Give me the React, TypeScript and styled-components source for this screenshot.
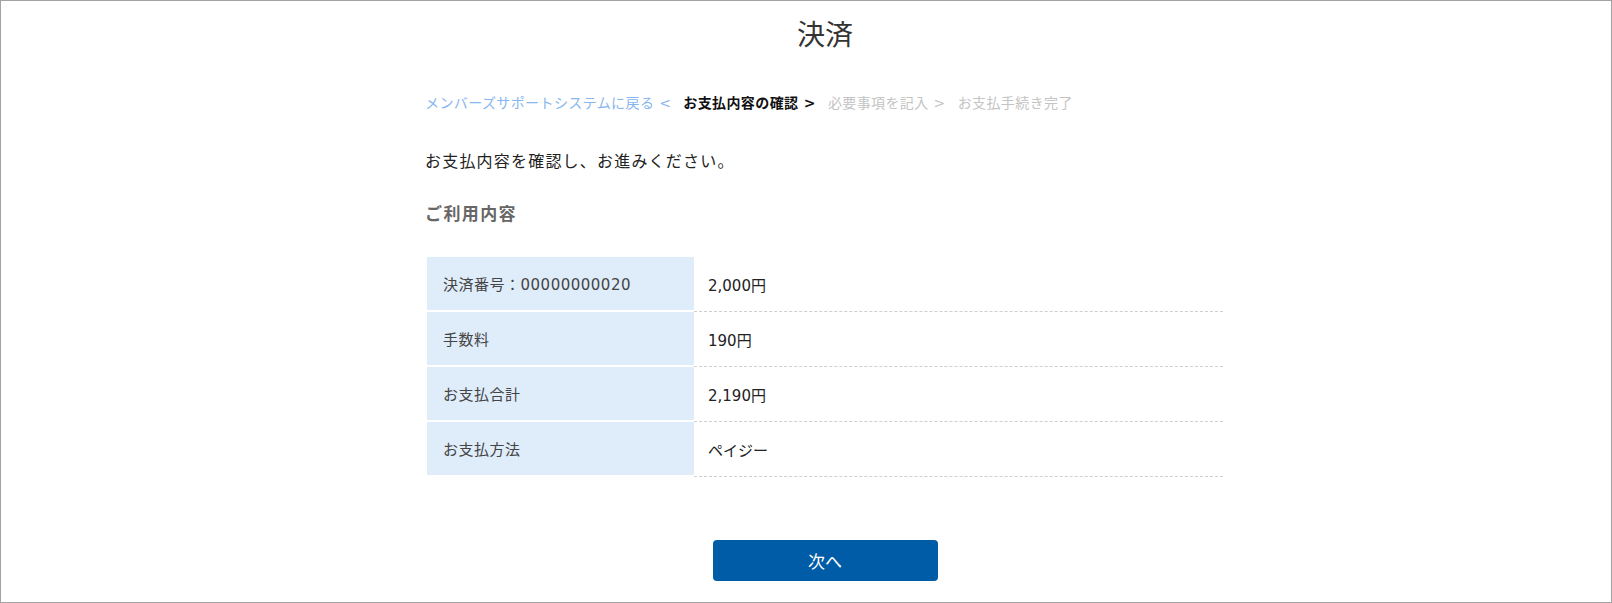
import React from 'react'
import styled, { createGlobalStyle } from 'styled-components'

const GlobalStyle = createGlobalStyle`
  html, body {
    margin: 0;
    padding: 0;
    height: 100%;
    background: #fff;
  }
  body {
    font-family: "DejaVu Sans", "Noto Sans CJK JP", "Noto Sans", sans-serif;
    color: #222;
  }
  #root {
    height: 100%;
  }
`

const Frame = styled.div`
  box-sizing: border-box;
  min-height: 100vh;
  border: 1px solid #a3a3a3;
  padding: 15px 0 0 38px;
  display: flex;
  justify-content: center;
  overflow: hidden;
`

const Column = styled.div`
  width: 796px;
  display: flex;
  flex-direction: column;
`

const Title = styled.h1`
  margin: 0;
  height: 40px;
  line-height: 40px;
  font-size: 28px;
  font-weight: 400;
  color: #333;
  text-align: center;
`

const Crumbs = styled.nav`
  margin: 37px 0 0 -2px;
  height: 20px;
  line-height: 20px;
  display: flex;
  gap: 12px;
  font-size: 14px;
  letter-spacing: 0.4px;
`

const Crumb = styled.span<{ $state: 'link' | 'current' | 'todo' }>`
  white-space: nowrap;
  color: ${p => (p.$state === 'link' ? '#88b6ee' : p.$state === 'current' ? '#111' : '#c4c4c4')};
  font-weight: ${p => (p.$state === 'current' ? 700 : 400)};
`

const Lead = styled.p`
  margin: 37px 0 0 -2px;
  height: 24px;
  line-height: 24px;
  font-size: 16px;
  letter-spacing: 1.2px;
  color: #222;
`

const Heading = styled.h2`
  margin: 28px 0 0 -2px;
  height: 24px;
  line-height: 24px;
  font-size: 17px;
  letter-spacing: 1.4px;
  font-weight: 700;
  color: #666;
`

const Table = styled.div`
  margin-top: 31px;
  display: grid;
  grid-template-columns: 267px 1fr;
`

const Label = styled.div`
  box-sizing: border-box;
  height: 55px;
  padding: 0 16px;
  display: flex;
  align-items: center;
  background: #dfecfa;
  border-bottom: 2px solid #fff;
  font-size: 15px;
  letter-spacing: 0.5px;
  color: #444;
`

const Value = styled.div`
  box-sizing: border-box;
  height: 55px;
  padding: 0 14px;
  display: flex;
  align-items: center;
  border-bottom: 1px dashed #cfcfcf;
  font-size: 15px;
  color: #222;
`

const Actions = styled.div`
  margin-top: 63px;
  display: flex;
  justify-content: center;
`

const NextButton = styled.button`
  width: 225px;
  height: 41px;
  border: none;
  border-radius: 4px;
  background: #005ca6;
  color: #fff;
  font-family: inherit;
  font-size: 17px;
  cursor: pointer;
`

const rows = [
  { label: '決済番号：00000000020', value: '2,000円' },
  { label: '手数料', value: '190円' },
  { label: 'お支払合計', value: '2,190円' },
  { label: 'お支払方法', value: 'ペイジー' },
]

function App() {
  return (
    <>
      <GlobalStyle />
      <Frame>
        <Column>
          <Title>決済</Title>
          <Crumbs>
            <Crumb $state="link">メンバーズサポートシステムに戻る &lt;</Crumb>
            <Crumb $state="current">お支払内容の確認 &gt;</Crumb>
            <Crumb $state="todo">必要事項を記入 &gt;</Crumb>
            <Crumb $state="todo">お支払手続き完了</Crumb>
          </Crumbs>
          <Lead>お支払内容を確認し、お進みください。</Lead>
          <Heading>ご利用内容</Heading>
          <Table>
            {rows.map(r => (
              <React.Fragment key={r.label}>
                <Label>{r.label}</Label>
                <Value>{r.value}</Value>
              </React.Fragment>
            ))}
          </Table>
          <Actions>
            <NextButton>次へ</NextButton>
          </Actions>
        </Column>
      </Frame>
    </>
  )
}

export default App
